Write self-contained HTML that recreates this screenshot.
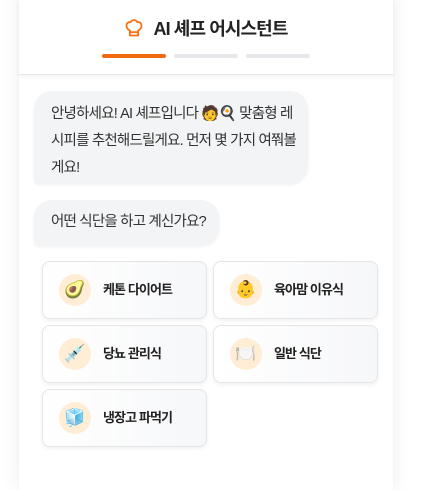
<!DOCTYPE html>
<html><head><meta charset="utf-8"><style>
body{margin:0;width:438px;height:475px;background:#fff;font-family:"Liberation Sans","Noto Sans CJK KR",sans-serif;overflow:hidden;position:relative}
.card{position:absolute;left:19px;top:-10px;width:374px;height:500px;background:#fff;box-shadow:0 0 18px rgba(0,0,0,.08)}
.hdr{position:absolute;left:19px;top:0;width:374px;height:74px;border-bottom:1px solid #e8e8ea;box-shadow:0 2px 4px rgba(0,0,0,.05);background:#fff}
.title{position:absolute;left:0;right:0;top:15px;text-align:center;font-size:18px;font-weight:bold;color:#222;letter-spacing:-0.9px}
.bar{position:absolute;top:54px;height:4px;width:64px;border-radius:2px;background:#e5e7eb}
.bub{position:absolute;left:34px;background:#f3f4f6;border-radius:18px 18px 18px 4px;color:#333;font-size:14.5px;letter-spacing:-0.8px;line-height:27px;padding:0 17px;box-shadow:0 2px 3px rgba(0,0,0,.06);word-break:break-all}
.opt{position:absolute;width:163px;height:56px;border:1px solid #e3e5e8;border-radius:8px;background:linear-gradient(90deg,#fff,#f6f7f9);box-shadow:0 2px 4px rgba(0,0,0,.06)}
.ic{position:absolute;left:16px;top:12px;width:32px;height:32px;border-radius:50%;background:#ffedd5;text-align:center;line-height:32px;font-size:17px}
.lb{position:absolute;left:60px;top:0;line-height:56px;font-size:13px;letter-spacing:-0.9px;font-weight:bold;color:#222}
</style></head><body>
<div class="card"></div>
<div class="hdr">
<div class="title"><svg width="20" height="20" viewBox="0 0 24 24" style="vertical-align:-3px;margin-right:9px" fill="none" stroke="#f97316" stroke-width="2.2" stroke-linejoin="round"><path d="M7 21h10v-6c2-1 4-3 4-6a4 4 0 0 0-5-4 4.5 4.5 0 0 0-8 0 4 4 0 0 0-5 4c0 3 2 5 4 6z"/><path d="M7 17h10"/></svg>AI 셰프 어시스턴트</div>
</div>
<div class="bar" style="left:102px;background:#f26a0f"></div>
<div class="bar" style="left:174px"></div>
<div class="bar" style="left:246px"></div>
<div class="bub" style="top:91px;width:246px;padding-right:11px;padding-top:10px;padding-bottom:10px;height:72px">안녕하세요! AI 셰프입니다 🧑🍳 맞춤형 레시피를 추천해드릴게요. 먼저 몇 가지 여쭤볼게요!</div>
<div class="bub" style="top:200px;height:45px;line-height:45px;padding-right:13px">어떤 식단을 하고 계신가요?</div>
<div class="opt" style="left:42px;top:261px"><div class="ic">🥑</div><div class="lb">케톤 다이어트</div></div>
<div class="opt" style="left:213px;top:261px"><div class="ic">👶</div><div class="lb">육아맘 이유식</div></div>
<div class="opt" style="left:42px;top:325px"><div class="ic">💉</div><div class="lb">당뇨 관리식</div></div>
<div class="opt" style="left:213px;top:325px"><div class="ic">🍽️</div><div class="lb">일반 식단</div></div>
<div class="opt" style="left:42px;top:389px"><div class="ic">🧊</div><div class="lb">냉장고 파먹기</div></div>
</body></html>
